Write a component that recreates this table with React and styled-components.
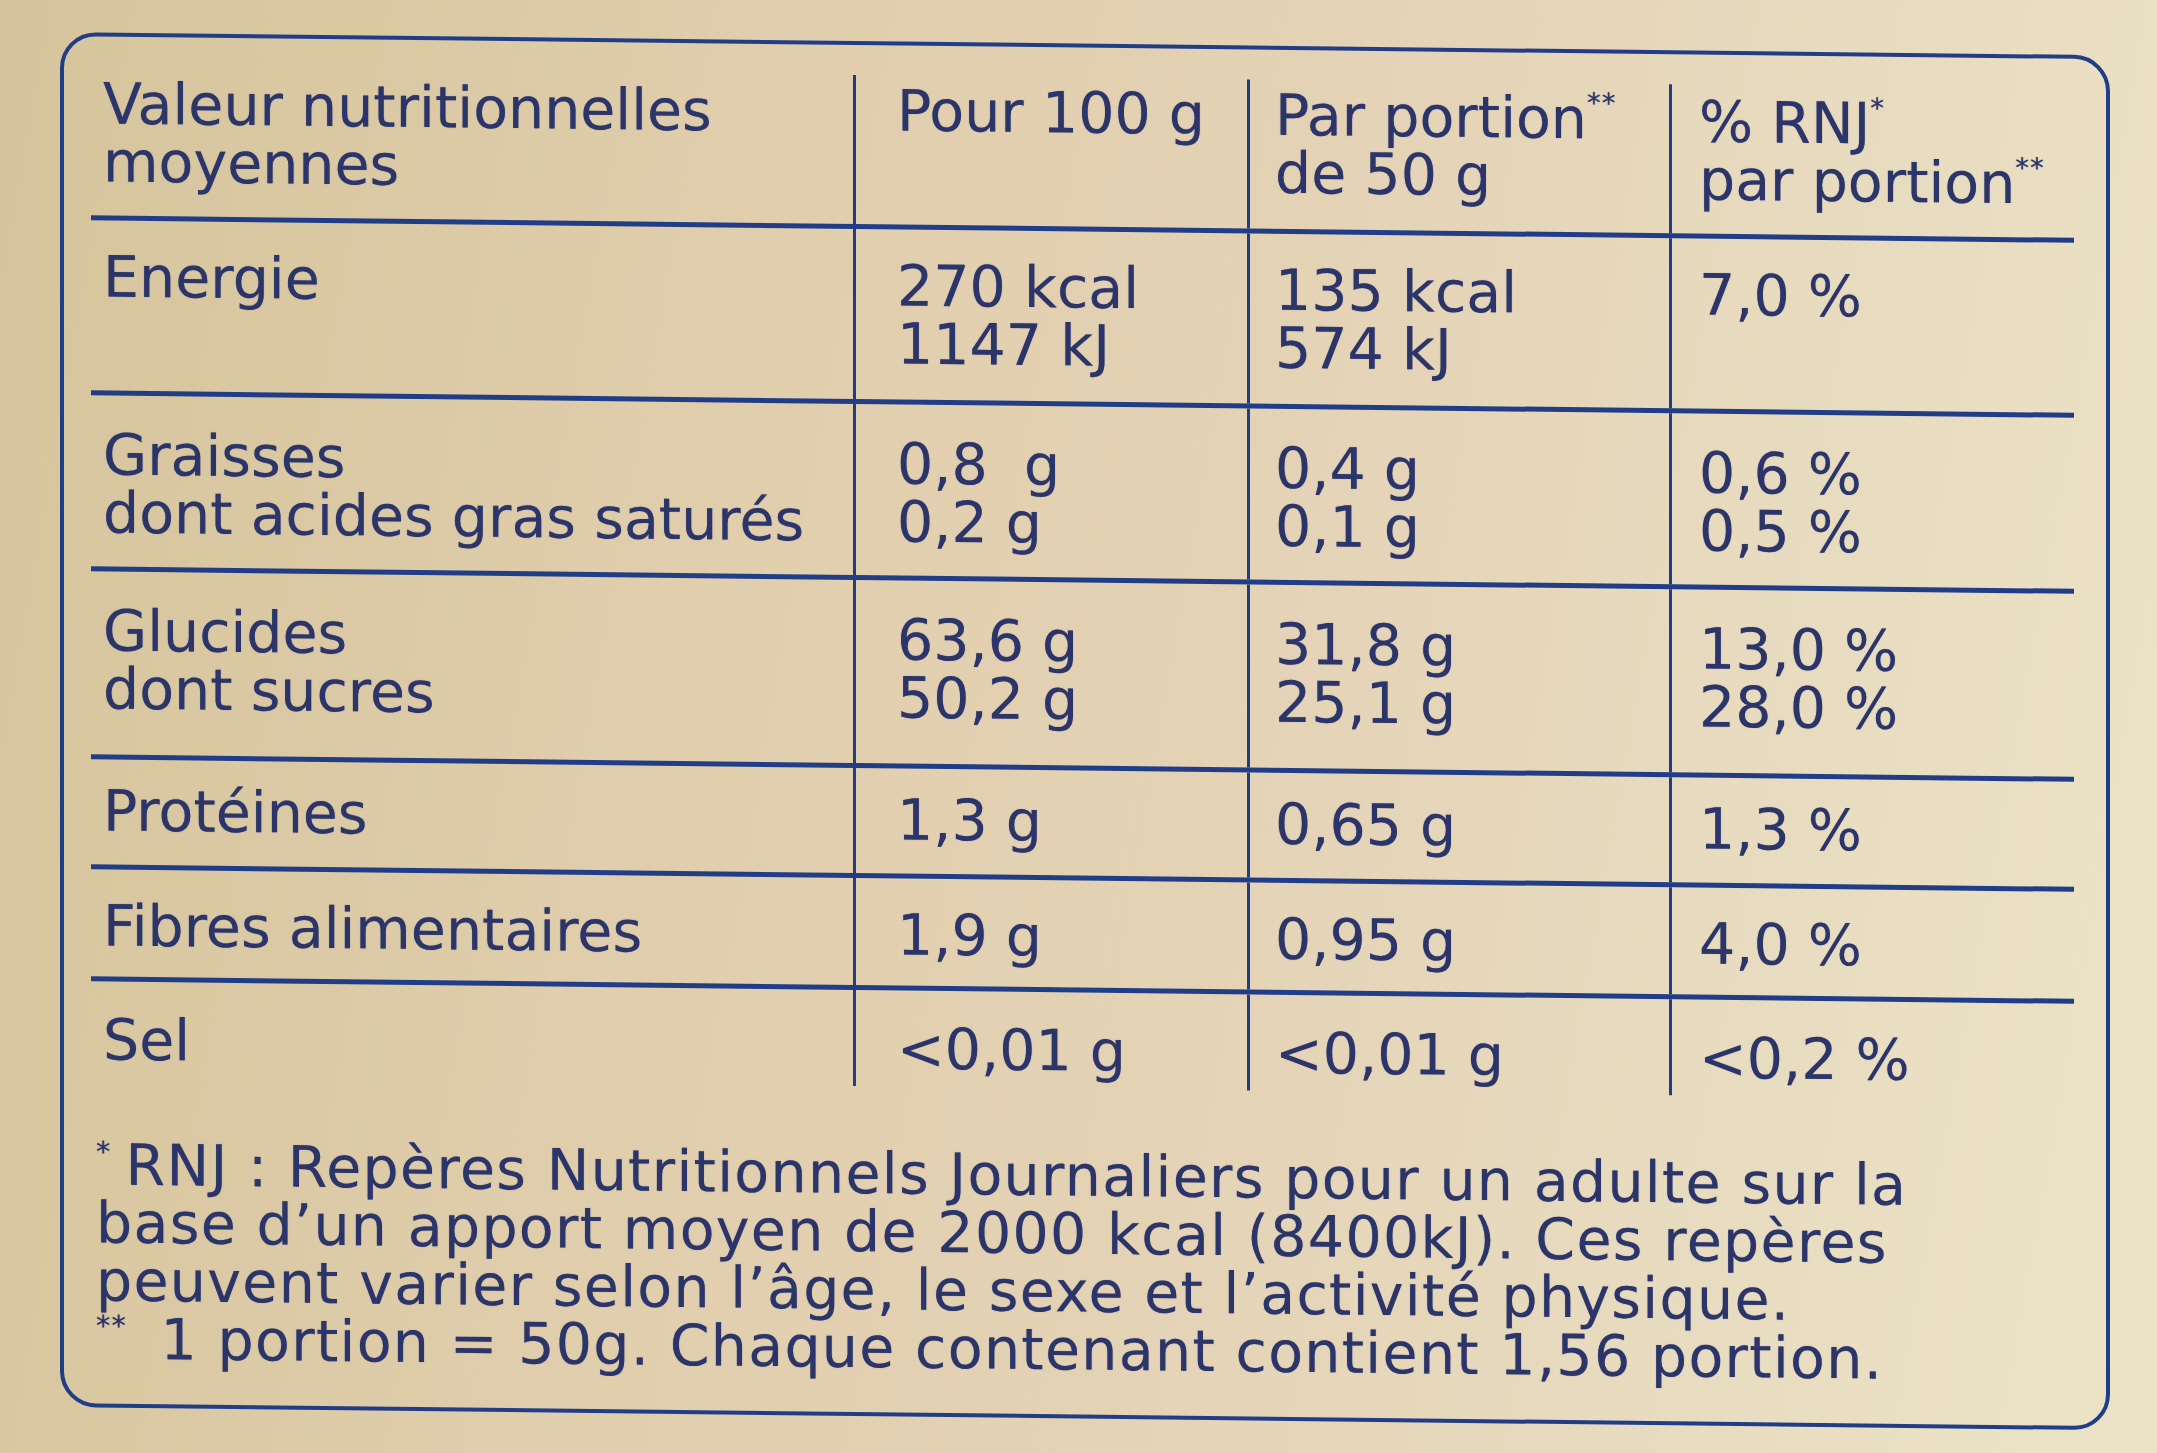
import React from 'react';
import styled, { createGlobalStyle } from 'styled-components';

const GlobalStyle = createGlobalStyle`
  html, body {
    margin: 0;
    padding: 0;
  }
  body {
    background: linear-gradient(100deg, #d5c49b 0%, #dfcdab 30%, #e4d2b5 55%, #e8dcc0 80%, #ece3c7 100%);
    font-family: "DejaVu Sans", Verdana, sans-serif;
  }
`;

const LINE = '#213d88';
const INK = '#2b3569';

const Page = styled.div`
  width: 2157px;
  height: 1453px;
  box-sizing: border-box;
  padding: 32px 0 0 60px;
  overflow: hidden;
`;

const Card = styled.div`
  width: 2050px;
  box-sizing: border-box;
  border: 4px solid ${LINE};
  border-radius: 36px;
  padding: 30px 32px 36px 27px;
  transform: skewY(0.65deg);
  transform-origin: left top;
  color: ${INK};
  font-size: 57px;
  line-height: 58px;
  text-shadow: 0 0 1px rgba(43, 53, 105, 0.55);
`;

const Table = styled.div`
  width: 1983px;
  display: flex;
  flex-direction: column;
`;

const Row = styled.div`
  display: grid;
  grid-template-columns: 762px 394px 422px 405px;
  height: ${(p) => p.$h}px;
  box-sizing: border-box;
  border-bottom: ${(p) => (p.$last ? 'none' : `5px solid ${LINE}`)};
`;

const Cell = styled.div`
  box-sizing: border-box;
  padding-top: ${(p) => p.$pad}px;
  padding-left: ${(p) => p.$left}px;
  border-left: ${(p) => (p.$first ? 'none' : `3px solid ${LINE}`)};
  white-space: pre;
`;

const Line = styled.div`
  display: block;
`;

const Sup = styled.sup`
  font-size: 0.48em;
  line-height: 0;
  vertical-align: 0.95em;
  letter-spacing: 1px;
`;

const Footnote = styled.div`
  margin-top: 58px;
  padding-left: 5px;
  white-space: nowrap;
  letter-spacing: 1.3px;
`;

const NoteSup = styled.span`
  display: inline-block;
  font-size: 0.5em;
  vertical-align: 0.8em;
  line-height: 0;
  margin-right: 14px;
`;

const lefts = [12, 41, 25, 27];

const rows = [
  {
    h: 175, pad: 27,
    cells: [['Energie'], ['270 kcal', '1147 kJ'], ['135 kcal', '574 kJ'], ['7,0 %']],
  },
  {
    h: 176, pad: 30,
    cells: [
      ['Graisses', 'dont acides gras saturés'],
      ['0,8  g', '0,2 g'],
      ['0,4 g', '0,1 g'],
      ['0,6 %', '0,5 %'],
    ],
  },
  {
    h: 188, pad: 30,
    cells: [['Glucides', 'dont sucres'], ['63,6 g', '50,2 g'], ['31,8 g', '25,1 g'], ['13,0 %', '28,0 %']],
  },
  { h: 110, pad: 22, cells: [['Protéines'], ['1,3 g'], ['0,65 g'], ['1,3 %']] },
  { h: 112, pad: 27, cells: [['Fibres alimentaires'], ['1,9 g'], ['0,95 g'], ['4,0 %']] },
  { h: 96, pad: 29, cells: [['Sel'], ['<0,01 g'], ['<0,01 g'], ['<0,2 %']] },
];

export default function App() {
  return (
    <Page>
      <GlobalStyle />
      <Card>
        <Table>
          <Row $h={154}>
            <Cell $first $pad={8} $left={lefts[0]}>
              <Line>Valeur nutritionnelles</Line>
              <Line>moyennes</Line>
            </Cell>
            <Cell $pad={6} $left={lefts[1]}>
              <Line>Pour 100 g</Line>
            </Cell>
            <Cell $pad={6} $left={lefts[2]}>
              <Line>Par portion<Sup>**</Sup></Line>
              <Line>de 50 g</Line>
            </Cell>
            <Cell $pad={8} $left={lefts[3]}>
              <Line>% RNJ<Sup>*</Sup></Line>
              <Line>par portion<Sup>**</Sup></Line>
            </Cell>
          </Row>
          {rows.map((r, i) => (
            <Row key={i} $h={r.h} $last={i === rows.length - 1}>
              {r.cells.map((lines, j) => (
                <Cell key={j} $first={j === 0} $pad={r.pad} $left={lefts[j]}>
                  {lines.map((t, k) => (
                    <Line key={k}>{t}</Line>
                  ))}
                </Cell>
              ))}
            </Row>
          ))}
        </Table>
        <Footnote>
          <NoteSup>*</NoteSup>RNJ : Repères Nutritionnels Journaliers pour un adulte sur la
          <br />
          base d’un apport moyen de 2000 kcal (8400kJ). Ces repères
          <br />
          peuvent varier selon l’âge, le sexe et l’activité physique.
          <br />
          <NoteSup>**</NoteSup> 1 portion = 50g. Chaque contenant contient 1,56 portion.
        </Footnote>
      </Card>
    </Page>
  );
}
